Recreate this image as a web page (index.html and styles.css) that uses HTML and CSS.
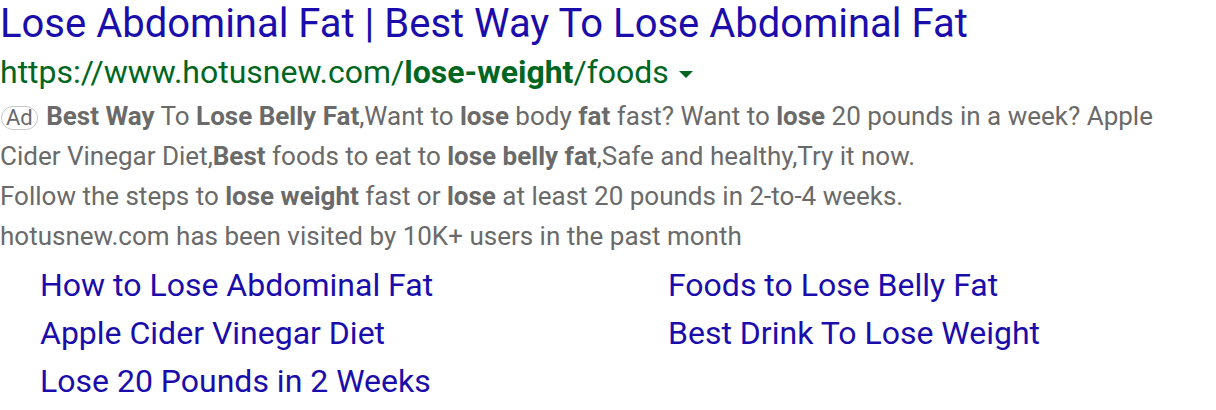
FILE: index.html
```html
<!DOCTYPE html>
<html>
<head>
<meta charset="utf-8">
<link rel="stylesheet" href="styles.css">
</head>
<body>
<div class="result">
  <h3 class="title">Lose Abdominal Fat | Best Way To Lose Abdominal Fat</h3>
  <div class="url">https://www.hotusnew.com/<b>lose-weight</b>/foods<span class="caret"></span></div>
  <div class="desc">
    <span class="ad">Ad</span> <b>Best Way</b> To <b>Lose Belly Fat</b>,Want to <b>lose</b> body <b>fat</b> fast? Want to <b>lose</b> 20 pounds in a week? Apple Cider Vinegar Diet,<b>Best</b> foods to eat to <b>lose belly fat</b>,Safe and healthy,Try it now.<br>
    Follow the steps to <b>lose weight</b> fast or <b>lose</b> at least 20 pounds in 2-to-4 weeks.
  </div>
  <div class="visits">hotusnew.com has been visited by 10K+ users in the past month</div>
  <div class="sitelinks">
    <a href="#">How to Lose Abdominal Fat</a>
    <a href="#">Foods to Lose Belly Fat</a>
    <a href="#">Apple Cider Vinegar Diet</a>
    <a href="#">Best Drink To Lose Weight</a>
    <a href="#">Lose 20 Pounds in 2 Weeks</a>
  </div>
</div>
</body>
</html>
```
FILE: styles.css
```css
html, body {
  margin: 0;
  padding: 0;
  background: #fff;
}
body {
  font-family: Roboto, "Noto Sans", Arial, sans-serif;
}
.title {
  margin: 0;
  padding-top: 1px;
  font-size: 40px;
  line-height: 46px;
  font-weight: 400;
  color: #1a0dab;
  white-space: nowrap;
}
.url {
  padding-top: 1px;
  font-size: 32px;
  line-height: 48px;
  color: #006621;
  white-space: nowrap;
}
.url b {
  font-weight: 700;
}
.caret {
  display: inline-block;
  width: 0;
  height: 0;
  border-left: 7px solid transparent;
  border-right: 7px solid transparent;
  border-top: 7px solid #006621;
  vertical-align: middle;
  margin-left: 10px;
}
.desc, .visits {
  font-size: 26px;
  line-height: 40px;
  color: #6a6a6a;
}
.desc b {
  font-weight: 700;
}
.ad {
  display: inline-block;
  border: 1px solid #c8c8c8;
  border-radius: 12px;
  font-size: 22px;
  line-height: 22px;
  padding: 0 4px;
  margin-left: 1px;
  margin-right: 2px;
  vertical-align: middle;
  color: #6a6a6a;
}
.sitelinks {
  display: grid;
  grid-template-columns: 628px 1fr;
  padding-left: 40px;
  padding-top: 5px;
}
.sitelinks a {
  font-size: 32px;
  line-height: 48px;
  color: #1a0dab;
  text-decoration: none;
  white-space: nowrap;
}
```
